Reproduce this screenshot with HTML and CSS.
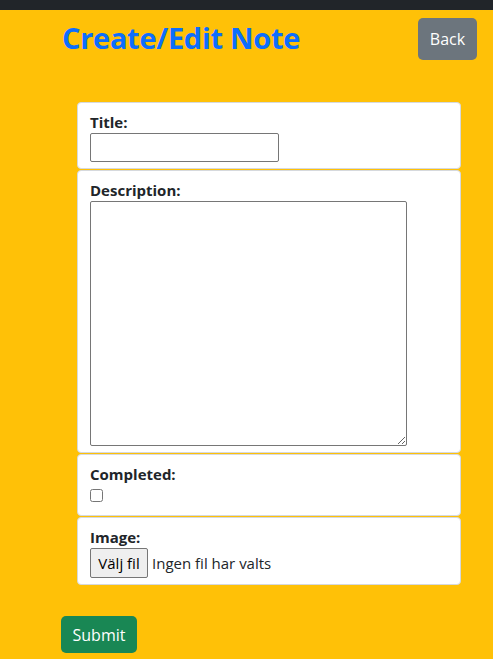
FILE: index.html
```html
<!DOCTYPE html>
<html lang="sv">
<head>
<meta charset="utf-8">
<title>Create/Edit Note</title>
<link rel="stylesheet" href="styles.css">
</head>
<body>
<div class="topbar"></div>
<main class="page">
  <header class="head">
    <h1 class="title">Create/Edit Note</h1>
    <button class="btn btn-back" type="button">Back</button>
  </header>
  <form class="form">
    <div class="cards">
      <div class="card">
        <label class="lbl" for="t">Title:</label>
        <input class="text-in" id="t" type="text">
      </div>
      <div class="card">
        <label class="lbl" for="d">Description:</label>
        <textarea class="area" id="d"></textarea>
      </div>
      <div class="card">
        <label class="lbl" for="c">Completed:</label>
        <input class="check" id="c" type="checkbox">
      </div>
      <div class="card">
        <label class="lbl" for="i">Image:</label>
        <div class="file">
          <span class="file-btn">Välj fil</span>
          <span class="file-name">Ingen fil har valts</span>
        </div>
      </div>
    </div>
    <button class="btn btn-submit" type="button">Submit</button>
  </form>
</main>
</body>
</html>
```
FILE: styles.css
```css
html, body {
  margin: 0;
  padding: 0;
}
body {
  background: #ffc107;
  font-family: "Open Sans", "Noto Sans", sans-serif;
  font-size: 16px;
  line-height: 1.5;
  color: #212529;
  min-height: 659px;
}
.topbar {
  height: 10px;
  background: #212529;
}
.page {
  padding: 0 16px 0 61px;
}
.head {
  display: flex;
  justify-content: space-between;
  align-items: flex-start;
  padding-top: 8px;
}
.title {
  margin: 2px 0 0 1px;
  font-size: 29px;
  line-height: 36px;
  font-weight: 700;
  color: #0d6efd;
  letter-spacing: -0.3px;
}
.btn {
  border: none;
  border-radius: 5px;
  color: #fff;
  font-family: inherit;
  font-size: 16px;
  line-height: 24px;
  padding: 0 12px;
}
.btn-back {
  background: #6c757d;
  height: 42px;
  width: 59px;
  padding: 0;
}
.form {
  margin-top: 42px;
}
.cards {
  margin-left: 16px;
  width: 384px;
  display: flex;
  flex-direction: column;
  gap: 1px;
}
.card {
  background: #fff;
  border: 1px solid #d6d9dd;
  border-radius: 4px;
  padding: 8px 12px 6px;
  display: flex;
  flex-direction: column;
  align-items: flex-start;
}
.lbl {
  font-weight: 700;
  font-size: 15px;
  line-height: 22px;
}
.text-in {
  box-sizing: border-box;
  width: 189px;
  height: 29px;
  margin: 0;
  border: 1px solid #767676;
  border-radius: 2px;
}
.area {
  box-sizing: border-box;
  width: 317px;
  height: 245px;
  margin: 0;
  border: 1px solid #767676;
  border-radius: 2px;
  resize: both;
}
.check {
  width: 13px;
  height: 13px;
  margin: 4px 0 7px;
}
.file {
  display: flex;
  align-items: center;
  gap: 4px;
  font-size: 15px;
}
.file-btn {
  box-sizing: border-box;
  height: 30px;
  width: 58px;
  border: 1px solid #767676;
  border-radius: 2px;
  background: #efefef;
  display: flex;
  align-items: center;
  justify-content: center;
  color: #000;
}
.btn-submit {
  margin-top: 31px;
  background: #198754;
  height: 37px;
  width: 76px;
  padding: 0;
}
```
